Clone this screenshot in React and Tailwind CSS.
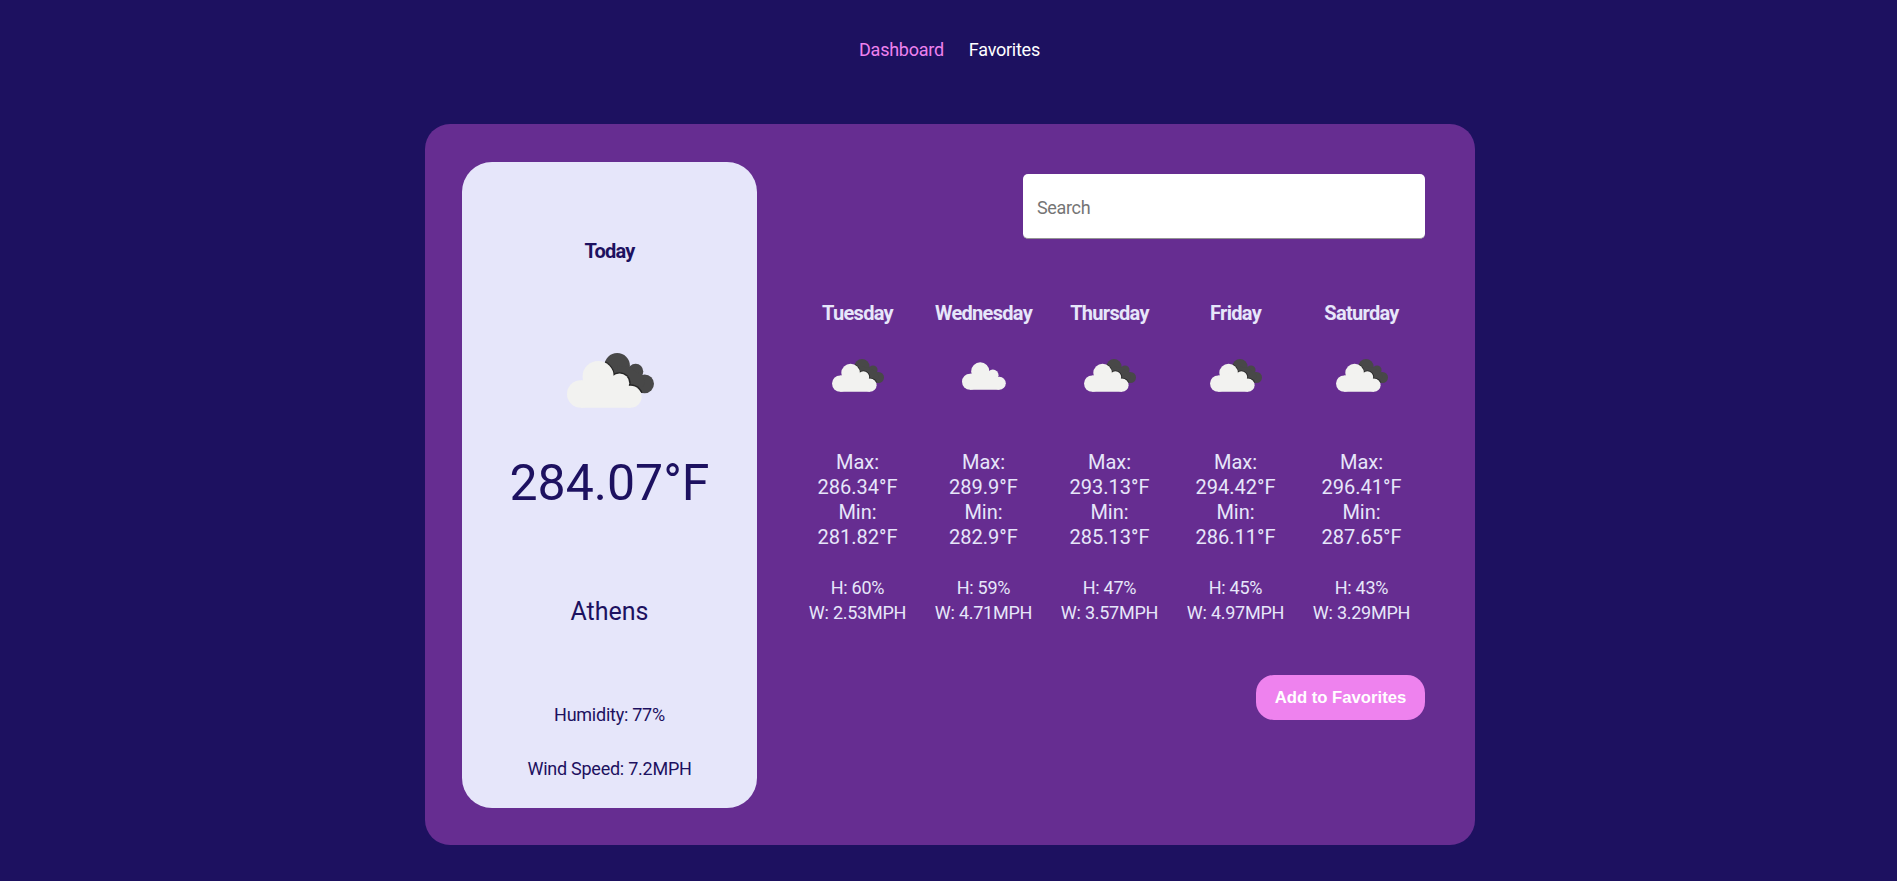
const days = [
  { name: "Tuesday", icon: "broken", max: "286.34", min: "281.82", h: "60", w: "2.53" },
  { name: "Wednesday", icon: "cloud", max: "289.9", min: "282.9", h: "59", w: "4.71" },
  { name: "Thursday", icon: "broken", max: "293.13", min: "285.13", h: "47", w: "3.57" },
  { name: "Friday", icon: "broken", max: "294.42", min: "286.11", h: "45", w: "4.97" },
  { name: "Saturday", icon: "broken", max: "296.41", min: "287.65", h: "43", w: "3.29" },
];

function DarkCloud() {
  return (
    <>
      <circle cx="150" cy="38" r="38" />
      <circle cx="205" cy="55" r="23" />
      <circle cx="232" cy="92" r="28" />
      <path d="M150 38L187 42L205 55L228 66L232 92L215 118L150 110Z" />
    </>
  );
}

function Cloud({ broken, className }) {
  return (
    <svg viewBox={broken ? "0 0 260 164" : "0 23 224 141"} className={className}>
      {broken && (
        <>
          <clipPath id="dark-cloud">
            <circle cx="150" cy="38" r="38" />
            <circle cx="205" cy="55" r="23" />
            <circle cx="232" cy="92" r="28" />
            <path d="M150 38L187 42L205 55L228 66L232 92L215 118L150 110Z" />
          </clipPath>
          <g fill="#484848">
            <DarkCloud />
          </g>
          <g clipPath="url(#dark-cloud)" fill="#262626">
            <circle cx="93" cy="70" r="50" />
            <circle cx="157" cy="90" r="33" />
            <circle cx="190" cy="130" r="37" />
          </g>
        </>
      )}
      <g fill="#f2f2f0">
        <circle cx="41" cy="122.500" r="41" />
        <circle cx="93" cy="70" r="46.500" />
        <circle cx="157" cy="90" r="29" />
        <circle cx="190" cy="130.500" r="33" />
        <path d="M41 163.500V82H47L93 70L157 90L186 98L190 163.500Z" />
      </g>
    </svg>
  );
}

export default function App() {
  return (
    <div className="flex min-h-[881px] flex-col items-center bg-[#1d1160] font-['Roboto',sans-serif] text-[#e6e6fa]">
      <nav className="ml-[2px] flex h-[124px] gap-[25px] pt-[37px] text-[18px] leading-[25px] tracking-[-0.25px]">
        <a className="text-[#ee82ee]">Dashboard</a>
        <a className="text-white">Favorites</a>
      </nav>
      <main className="ml-[3px] flex h-[721px] w-[1050px] rounded-[25px] bg-[#662d91] pt-[38px] pr-[50px] pl-[37px]">
        <section className="flex h-[646px] w-[295px] flex-col items-center rounded-[30px] bg-[#e6e6fa] text-[#1d1160]">
          <h2 className="mt-[77px] text-[20px] leading-[25px] font-bold tracking-[-0.8px]">Today</h2>
          <Cloud broken className="mt-[89px] ml-[1px] h-[55px] w-[87px]" />
          <p className="mt-[45px] text-[50px] leading-[60px]">284.07°F</p>
          <p className="mt-[84px] text-[25px] leading-[30px]">Athens</p>
          <p className="mt-[75px] text-[18px] leading-[25px] tracking-[-0.25px]">Humidity: 77%</p>
          <p className="mt-[29px] text-[18px] leading-[25px] tracking-[-0.25px]">Wind Speed: 7.2MPH</p>
        </section>
        <section className="ml-auto flex w-[630px] flex-col items-end pt-3">
          <input
            placeholder="Search"
            className="h-[65px] w-[402px] rounded-[5px] border-b border-[#949494] bg-white px-[14px] pt-[2px] text-[18px] tracking-[-0.35px] placeholder:text-[#757575]"
          />
          <div className="mt-[62px] grid w-full grid-cols-5 text-center">
            {days.map((d) => (
              <div key={d.name} className="flex flex-col items-center">
                <h3 className="mr-[1px] text-[20px] leading-[25px] font-bold tracking-[-0.7px]">{d.name}</h3>
                <div className="mt-[33px] flex h-[66px]">
                  {d.icon === "broken" ? (
                    <Cloud broken className="h-[33px] w-[52px]" />
                  ) : (
                    <Cloud className="mt-[3px] h-[28px] w-[44px]" />
                  )}
                </div>
                <p className="mt-[25px] mr-[1px] text-[20px] leading-[25px]">
                  Max:<br />{d.max}°F<br />Min:<br />{d.min}°F
                </p>
                <p className="mt-[25px] mr-[1px] text-[18px] leading-[25px] tracking-[-0.25px]">
                  H: {d.h}%<br />W: {d.w}MPH
                </p>
              </div>
            ))}
          </div>
          <button className="mt-[50px] h-[45px] w-[169px] rounded-[18px] bg-[#ee82ee] font-['Liberation_Sans',sans-serif] text-[16.7px] font-bold text-white">
            Add to Favorites
          </button>
        </section>
      </main>
    </div>
  );
}
